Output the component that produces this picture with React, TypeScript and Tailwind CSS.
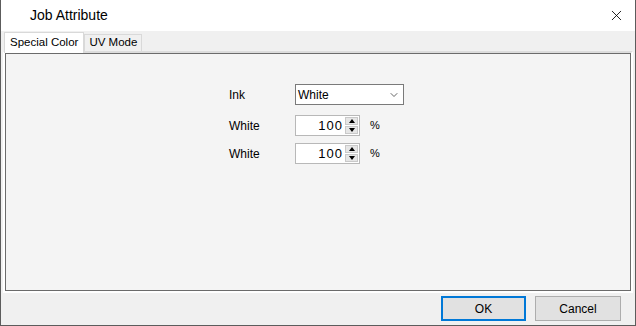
import { X, ChevronDown } from "lucide-react";

function Spin({ value }: { value: string }) {
  return (
    <div className="flex items-center gap-[10px]">
      <div className="flex h-[21px] w-[65px] items-stretch border border-[#b8b8b8] bg-white">
        <div className="flex flex-1 items-center justify-end pr-[2px] text-[13px] tracking-[1px] text-black">
          {value}
        </div>
        <div className="my-[1px] mr-[1px] flex w-[13px] flex-col gap-[1px]">
          <div className="flex flex-1 items-center justify-center border border-[#c9c9c9] bg-[#e6e6e6]">
            <div className="h-0 w-0 border-x-[3px] border-b-[4px] border-x-transparent border-b-black" />
          </div>
          <div className="flex flex-1 items-center justify-center border border-[#c9c9c9] bg-[#e6e6e6]">
            <div className="h-0 w-0 border-x-[3px] border-t-[4px] border-x-transparent border-t-black" />
          </div>
        </div>
      </div>
      <span className="text-[11px]">%</span>
    </div>
  );
}

export default function App() {
  return (
    <div
      className="flex h-[326px] w-[636px] flex-col border-x border-b border-[#5c5c5c] bg-[#f0f0f0] text-black"
      style={{ fontFamily: '"Liberation Sans", "Noto Sans CJK JP", sans-serif' }}
    >
      <div className="flex h-[31px] shrink-0 items-center justify-between bg-white pl-[29px] pr-[8px]">
        <span className="text-[14px]">Job Attribute</span>
        <X size={17} strokeWidth={1.2} className="mr-[2px]" />
      </div>

      <div className="flex flex-1 flex-col px-[2px] pt-[1px]">
        <div className="flex items-end pl-[1px]">
          <div className="relative z-10 -mb-[2px] flex h-[21px] items-center border border-b-0 border-[#d9d9d9] bg-white px-[5px] text-[11.5px]">
            Special Color
          </div>
          <div className="flex h-[17px] items-center border border-b-0 border-[#d9d9d9] bg-[#f0f0f0] px-[4px] text-[11.5px]">
            UV Mode
          </div>
        </div>

        <div className="h-[242px] border-2 border-white border-t-[#dcdcdc]">
          <div className="h-full border border-[#6b6b6b] bg-[#f4f4f4] pl-[223px] pt-[30px] text-[12px]">
            <div className="flex items-center">
              <span className="w-[66px]">Ink</span>
              <div className="flex h-[21px] w-[109px] items-center justify-between border border-[#7a7a7a] bg-white pl-[2px] pr-[3px]">
                <span>White</span>
                <ChevronDown size={12} strokeWidth={1.5} className="text-[#333]" />
              </div>
            </div>
            <div className="mt-[10px] flex items-center">
              <span className="w-[66px]">White</span>
              <Spin value="100" />
            </div>
            <div className="mt-[7px] flex items-center">
              <span className="w-[66px]">White</span>
              <Spin value="100" />
            </div>
          </div>
        </div>

        <div className="flex justify-end gap-[9px] pr-[12px] pt-[3px]">
          <button className="h-[25px] w-[85px] border-2 border-[#0078d7] bg-[#e1e1e1] text-[12px]">
            OK
          </button>
          <button className="h-[25px] w-[86px] border border-[#adadad] bg-[#e1e1e1] text-[12px]">
            Cancel
          </button>
        </div>
      </div>
    </div>
  );
}
